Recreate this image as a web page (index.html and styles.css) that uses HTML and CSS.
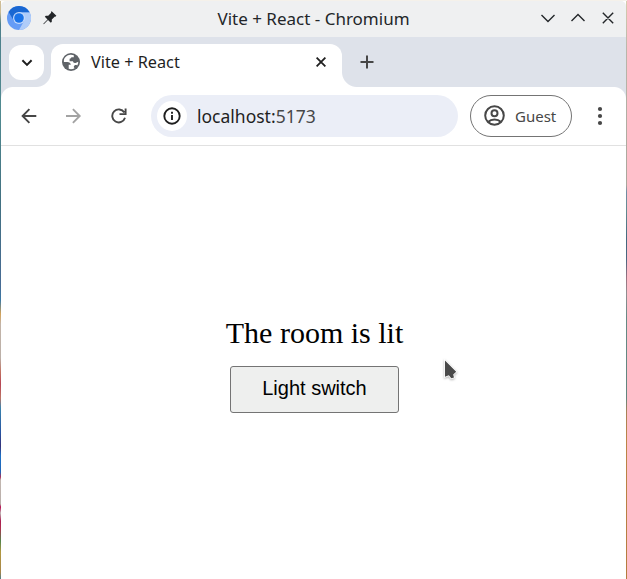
FILE: index.html
```html
<!DOCTYPE html>
<html lang="en">
<head>
<meta charset="utf-8">
<title>Vite + React</title>
<link rel="stylesheet" href="styles.css">
</head>
<body>
<div class="desktop">
<div class="window">
  <header class="titlebar">
    <div class="title-left">
      <svg width="24" height="24" viewBox="0 0 24 24">
        <circle cx="12" cy="12" r="12" fill="#659cf6"/>
        <path d="M12 6.2H22.6A12 12 0 0 1 12 24L17 15Z" fill="#afccf9"/>
        <path d="M1.6 6A12 12 0 0 1 22.5 6.2H12L7 15Z" fill="#1967d2"/>
        <circle cx="12" cy="12" r="6" fill="#c5dafa"/>
        <circle cx="12" cy="12" r="4.8" fill="#1a73e8"/>
      </svg>
      <svg class="pin" width="14" height="14" viewBox="0 0 14 14" fill="#232629">
        <path d="M8.7.3 13.4 4.8 12.4 5.8 11.9 5.6 8.8 8.6 8.8 10.8 7.8 11.7 5 9.1.8 13.3.3 12.8 4.5 8.5 1.8 5.8 2.8 4.8 5.2 4.8 8.2 1.8 7.9 1.1Z"/>
      </svg>
    </div>
    <div class="title">Vite + React - Chromium</div>
    <svg class="controls" width="76" height="16" viewBox="0 0 76 16" fill="none" stroke="#232629" stroke-width="1.4">
      <path d="M1.5 5 8 11.5 14.5 5M31.5 11 38 4.5 44.5 11M62.8 2.8 73.2 13.2M73.2 2.8 62.8 13.2"/>
    </svg>
  </header>
  <div class="tabstrip">
    <div class="search-tabs">
      <svg width="12" height="8" viewBox="0 0 12 8" fill="none" stroke="#1f1f1f" stroke-width="2"><path d="M1.4 1.3 6 5.9 10.6 1.3"/></svg>
    </div>
    <div class="tab">
      <svg width="18" height="18" viewBox="0 0 18 18">
        <circle cx="9" cy="9" r="9" fill="#5f6368"/>
        <path d="M8.2 1.8C5.2 2 2.5 4.2 1.9 7.1V9H5.3C7.3 9 8.6 10.1 8.8 11.7H6.7V15.8C8.5 16.5 10.8 16.3 12.6 15.2L11.7 13.9C12.2 12.1 13.6 11.7 15.2 12.4 16 11.4 16.3 9.9 16.2 8.7L13.6 9.9C11.8 10.2 11.2 9.6 11 8.3H7.6V5.7C8.6 5.6 9.3 5.3 9.3 4.3H11.8V2.2C10.5 1.8 9.4 1.6 8.2 1.8Z" fill="#fff"/>
      </svg>
      <span class="tab-title">Vite + React</span>
      <svg width="10" height="10" viewBox="0 0 10 10" stroke="#1f1f1f" stroke-width="1.8"><path d="M.6.6 9.4 9.4M9.4.6.6 9.4"/></svg>
    </div>
    <svg class="new-tab" width="14" height="14" viewBox="0 0 14 14" stroke="#474747" stroke-width="2"><path d="M7 .5V13.5M.5 7H13.5"/></svg>
  </div>
  <div class="toolbar">
    <svg class="nav" width="106" height="16" viewBox="0 0 106 16" fill="none" stroke-width="1.9">
      <path d="M15.3 8H1.8M8.4 1.2 1.6 8 8.4 14.8" stroke="#474747"/>
      <path d="M45 8H58.5M51.9 1.2 58.7 8 51.9 14.8" stroke="#a3a3a3"/>
      <path d="M103.3 4.5A6.5 6.5 0 1 0 104 9.8M104.6.5V6.1H98.5" stroke="#474747"/>
    </svg>
    <div class="address">
      <div class="info">
        <svg width="18" height="18" viewBox="0 0 18 18" fill="none" stroke="#1f1f1f" stroke-width="1.9"><circle cx="9" cy="9" r="7.7"/><path d="M9 8V13M9 4.8V6.7"/></svg>
      </div>
      <span class="url">localhost:<span class="port">5173</span></span>
    </div>
    <div class="guest">
      <svg width="21" height="21" viewBox="0 0 21 21" fill="none" stroke="#474747" stroke-width="2"><circle cx="10.5" cy="10.5" r="9.3"/><circle cx="10.5" cy="8.3" r="3"/><path d="M4 17C7.5 13.5 13.5 13.5 17 17"/></svg>
      <span>Guest</span>
    </div>
    <svg class="more" width="6" height="20" viewBox="0 0 6 20" fill="#474747"><circle cx="3" cy="3" r="2.1"/><circle cx="3" cy="10" r="2.1"/><circle cx="3" cy="17" r="2.1"/></svg>
  </div>
  <main class="page">
    <div class="message">The room is lit</div>
    <button class="switch">Light switch</button>
  </main>
</div>
<svg class="cursor" width="20" height="28" viewBox="0 0 20 28"><path d="M4 3.5V19.8L7.8 18.2 10.3 21.3 13 20.5 12.2 17.5 15.2 14.8Z" fill="#4a4a4a" stroke="#fff" stroke-width="1.6" paint-order="stroke"/></svg>
</div>
</body>
</html>
```

FILE: styles.css
```css
* { box-sizing: border-box; }
body { margin: 0; overflow: hidden; font-family: "Noto Sans", sans-serif; }
svg { display: block; flex: none; }
.desktop {
  width: 627px;
  height: 579px;
  padding: 1px 1px 0;
  background:
    linear-gradient(#f5f1ea, #f5f1ea) 0 0 / 100% 1px no-repeat,
    linear-gradient(#cfbd96 0, #cfbd96 12px, #4d7f8b 24px, #518b91 110px, #427181 200px, #476b94 285px, #3b79a5 300px, #d5a359 314px, #c3b4a8 324px, #bbb0a8 358px, #c17160 372px, #b74555 384px, #bd7665 398px, #3a83ae 408px, #2755a2 432px, #35327a 446px, #1c71c7 456px, #2264b5 472px, #aa305c 477px, #c2b7b0 480px, #b9aeaa 504px, #b70b50 507px, #c0b6b5 513px, #aa1e51 521px, #b02e4e 528px, #53854c 541px, #b29840 552px, #a88549 572px, #4c7e88 579px) 0 0 / 1px 100% no-repeat,
    linear-gradient(#d8ccae 0, #b9b6aa 50px, #aaa69c 185px, #728ca3 192px, #638b90 210px, #43677e 240px, #4c6680 260px, #9b7280 278px, #918e91 294px, #658984 318px, #62857f 398px, #a88156 412px, #bc8446 440px, #b57b3e 579px) 626px 0 / 1px 100% no-repeat;
  position: relative;
}
.window {
  height: 578px;
  border-radius: 5px 5px 0 0;
  overflow: hidden;
  background: #fff;
  display: flex;
  flex-direction: column;
}
.titlebar {
  height: 36px;
  background: #eff0f1;
  display: grid;
  grid-template-columns: 1fr auto 1fr;
  align-items: center;
  padding: 0 10px 0 6px;
  color: #232629;
}
.title-left { display: flex; align-items: center; gap: 12px; margin-top: -2px; }
.title { padding-left: 4px; font-size: 17px; line-height: 24px; white-space: nowrap; }
.controls { justify-self: end; margin-top: -2px; }
.tabstrip {
  height: 50px;
  padding: 7px 0 0 8px;
  background: #dee2ea;
  display: flex;
}
.search-tabs {
  width: 35px;
  height: 35px;
  margin-top: 1px;
  border-radius: 12px;
  background: #fff;
  display: flex;
  align-items: center;
  justify-content: center;
}
.tab {
  position: relative;
  width: 291px;
  height: 43px;
  margin-left: 7px;
  padding: 0 16px 7px 11px;
  border-radius: 12px 12px 0 0;
  background: #fff;
  display: flex;
  align-items: center;
}
.tab::before, .tab::after {
  content: "";
  position: absolute;
  bottom: 0;
  width: 15px;
  height: 15px;
}
.tab::before { left: -15px; background: radial-gradient(circle at 0 0, transparent 14.5px, #fff 15.5px); }
.tab::after { right: -15px; background: radial-gradient(circle at 100% 0, transparent 14.5px, #fff 15.5px); }
.tab-title { flex: 1; margin-left: 11px; font-size: 16.25px; color: #1f1f1f; }
.new-tab { margin: 11px 0 0 17.5px; }
.toolbar {
  position: relative;
  height: 59px;
  border-bottom: 1px solid #e1e1e1;
  background: #fff;
  display: flex;
  align-items: center;
  padding-left: 20px;
}
.toolbar::before {
  content: "";
  position: absolute;
  inset: 0 0 auto;
  height: 12px;
  z-index: 0;
  background:
    radial-gradient(circle at 12px 12px, transparent 11.5px, #dee2ea 12.5px) 0 0 / 12px 12px no-repeat,
    radial-gradient(circle at 0 12px, transparent 11.5px, #dee2ea 12.5px) 100% 0 / 12px 12px no-repeat;
}
.address {
  width: 307px;
  height: 42px;
  margin-left: 24px;
  padding-left: 6px;
  border-radius: 21px;
  background: #ebeef7;
  display: flex;
  align-items: center;
}
.info {
  width: 30px;
  height: 30px;
  border-radius: 50%;
  background: #fff;
  display: flex;
  align-items: center;
  justify-content: center;
}
.url { margin-left: 10px; font-size: 17.5px; color: #1f1f1f; }
.port { color: #474747; }
.guest {
  width: 102px;
  height: 42px;
  margin-left: 12px;
  padding: 0 0 1px 13px;
  border: 1px solid #747474;
  border-radius: 21px;
  display: flex;
  align-items: center;
  gap: 10px;
  font-size: 15px;
  color: #474747;
}
.more { margin-left: 25px; }
.page {
  flex: 1;
  display: flex;
  flex-direction: column;
  align-items: center;
  padding-top: 170px;
  padding-left: 2px;
}
.message { font: 30px/34px "Liberation Serif", serif; color: #000; }
.switch {
  width: 169px;
  height: 47px;
  margin-top: 16px;
  padding: 0 0 2px;
  border: 1px solid #747474;
  border-radius: 3px;
  background: #eeefee;
  font: 20px "Liberation Sans", sans-serif;
  color: #000;
}
.cursor {
  position: absolute;
  left: 441px;
  top: 357px;
  filter: drop-shadow(0 1px 1px rgba(0, 0, 0, .3));
}
```
